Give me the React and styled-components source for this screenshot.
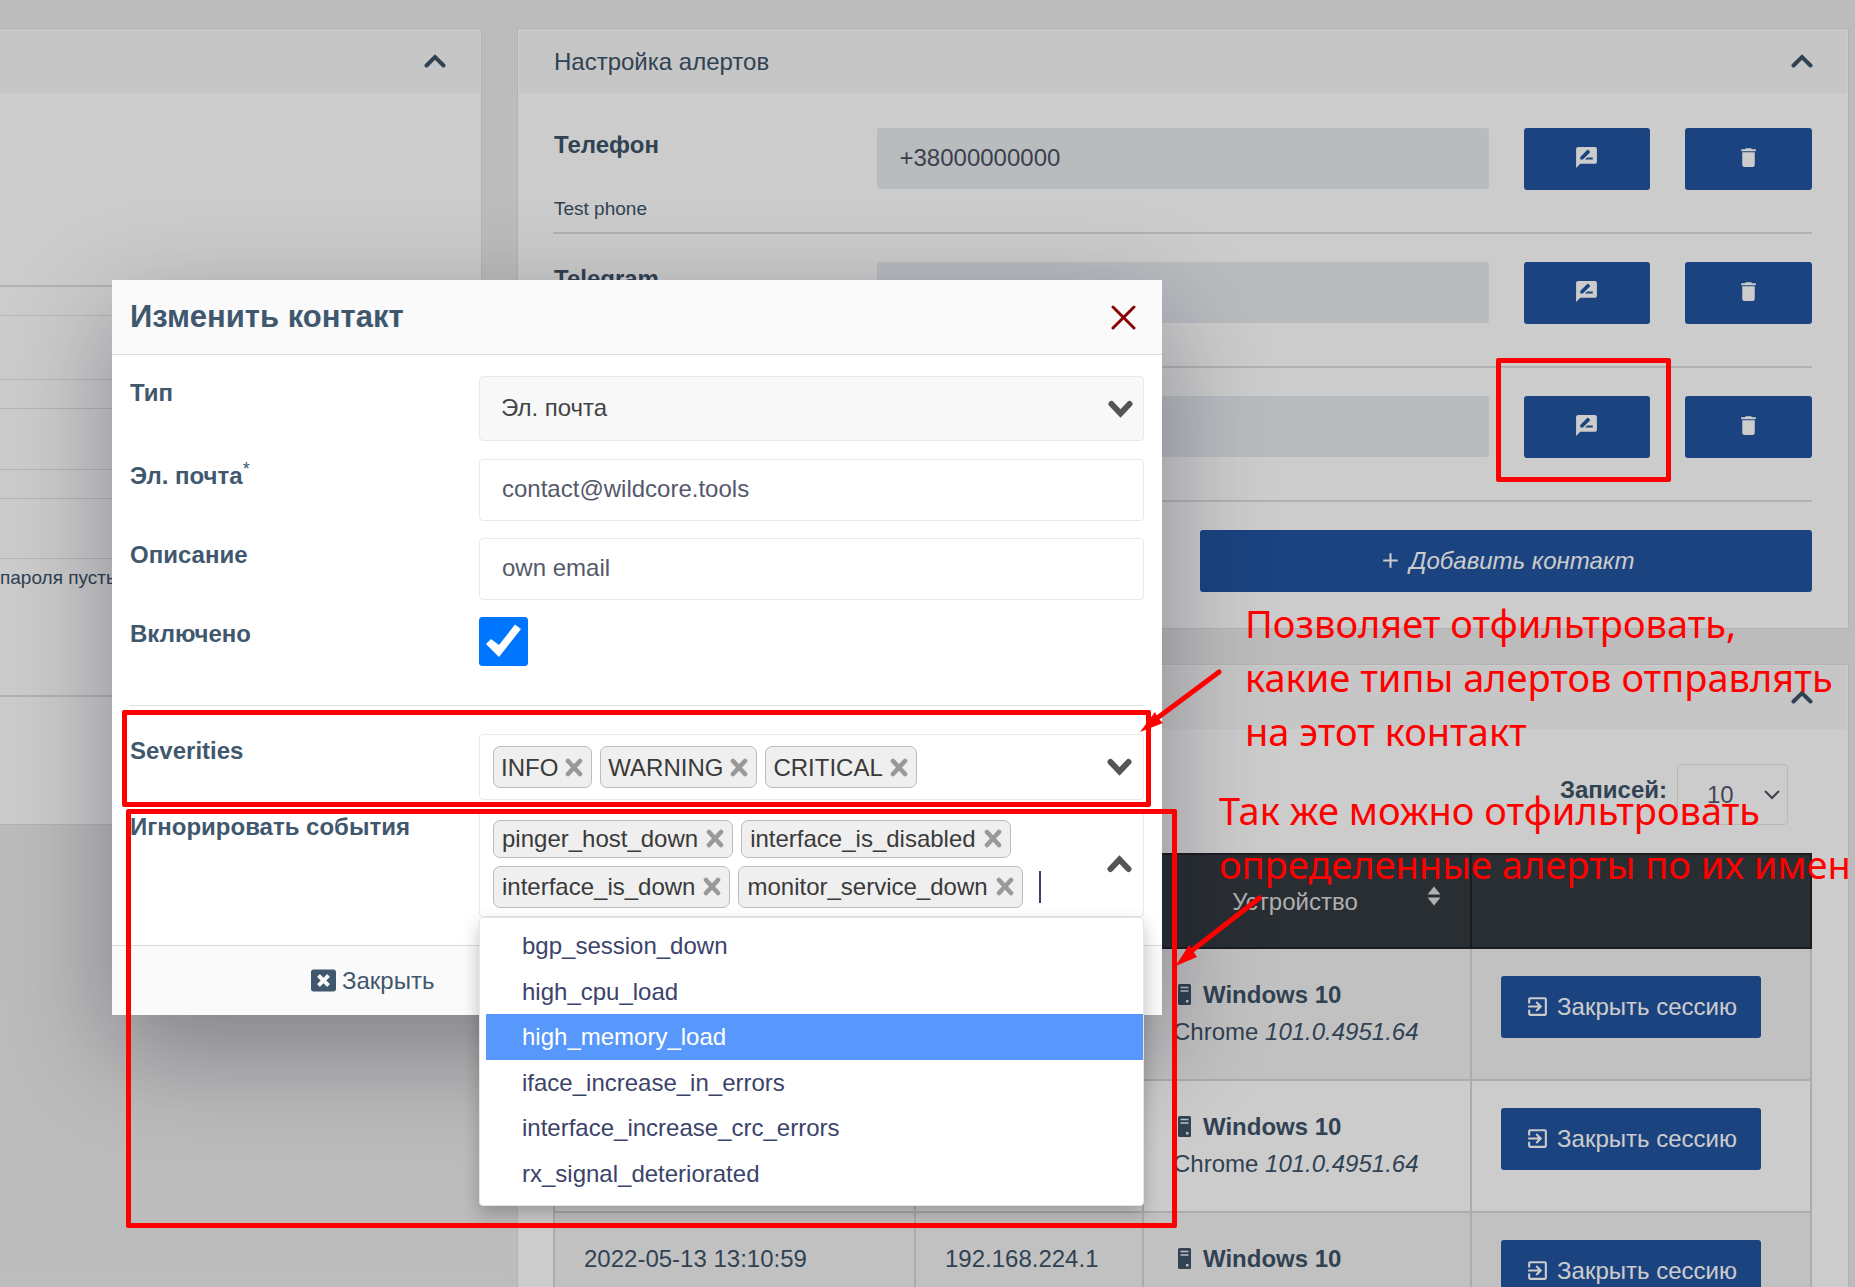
import React from "react";
import styled, { createGlobalStyle, css } from "styled-components";
import { MdRateReview, MdDelete, MdExitToApp, MdAdd } from "react-icons/md";
import { FaWindowClose } from "react-icons/fa";

const GlobalStyle = createGlobalStyle`
  *, *::before, *::after { box-sizing: border-box; }
  body {
    margin: 0;
    background: #ececec;
    color: #3d5368;
    font-family: "Liberation Sans", Arial, sans-serif;
    font-size: 24px;
    line-height: 33px;
  }
  button, input, select { font: inherit; color: inherit; }
  h2, p, ul { margin: 0; padding: 0; }
`;

const Page = styled.div`
  position: relative;
  height: 100vh;
  overflow: hidden;
`;

const Columns = styled.main`
  display: grid;
  grid-template-columns: 482px minmax(0, 1fr);
  gap: 35px;
  align-items: start;
  padding: 28px 6px 0 0;
`;

const Stack = styled.div`
  display: grid;
  gap: 35px;
`;

const Card = styled.section`
  border: 1px solid #e0e0e0;
  border-left-width: ${(p) => (p.$cutLeft ? "0" : "1px")};
  padding: ${(p) => (p.$cutLeft ? "1px 1px 0 0" : "1px 1px 0")};
  background: #fff;
`;

const CardHeader = styled.header`
  display: flex;
  align-items: center;
  justify-content: flex-end;
  height: 63px;
  padding: 0 34px 0 35px;
  background: #f8f8f8;
  > button { padding-bottom: 2px; }
`;

const CardTitle = styled.h2`
  flex: 1;
  font-size: 24px;
  font-weight: 400;
`;

const IconButton = styled.button`
  display: flex;
  padding: 0;
  border: 0;
  background: none;
  cursor: pointer;
`;

const Divider = styled.hr`
  width: 100%;
  height: 2px;
  margin: 0;
  border: 0;
  background: #dfdfdf;
`;

/* left card */
const Blank = styled.div`
  height: ${(p) => p.$height}px;
`;

const StripeRow = styled.div`
  height: ${(p) => p.$height}px;
  border-bottom: 1px solid #e0e3e5;
`;

const Note = styled.p`
  padding: 5px 0 103px;
  font-size: 19px;
  line-height: 28px;
  white-space: nowrap;
`;

/* alert contacts */
const AlertsBody = styled.div`
  display: grid;
  gap: 28px;
  padding: 35px 35px 36px 34px;
`;

const Contact = styled.div`
  display: grid;
  grid-template-rows: 104px 2px;
`;

const ContactGrid = styled.div`
  display: grid;
  grid-template-columns: repeat(8, minmax(0, 1fr));
  column-gap: 35px;
  align-content: start;
`;

const ContactLabel = styled.label`
  grid-column: span 2;
  padding-left: 1px;
  font-weight: 700;
`;

const ContactValue = styled.input`
  grid-column: span 4;
  width: 100%;
  height: 61px;
  padding: 0 23px 2px;
  border: 0;
  border-radius: 3px;
  background: #e6ecef;
  color: #4a5060;
`;

const ContactNote = styled.p`
  grid-column: 1 / -1;
  margin-top: 5px;
  padding-left: 1px;
  font-size: 19px;
  line-height: 28px;
`;

const Primary = styled.button`
  display: flex;
  align-items: center;
  justify-content: center;
  gap: 7px;
  height: 62px;
  padding: 0 0 ${(p) => (p.$iconOnly ? 4 : 2)}px;
  border: 0;
  border-radius: 3px;
  background: #2254a0;
  color: #fff;
  white-space: nowrap;
  cursor: pointer;
  ${(p) =>
    p.$half &&
    css`
      grid-column: 5 / -1;
      font-style: italic;
    `}
  ${(p) => p.$width && `width: ${p.$width}px;`}
`;

/* sessions */
const SessionsBody = styled.div`
  padding: 35px 35px 36px 34px;
`;

const PageSize = styled.div`
  display: flex;
  justify-content: flex-end;
  gap: 10px;
  padding: 0 24px 28px 0;
`;

const PageSizeLabel = styled.label`
  font-weight: 700;
  line-height: 51px;
`;

const SelectBox = styled.div`
  display: grid;
  align-items: center;
  justify-items: end;
  width: ${(p) => (p.$small ? "111px" : "100%")};
  > * { grid-area: 1 / 1; }
  > svg { pointer-events: none; margin-right: ${(p) => (p.$small ? "7px" : "11px")}; }
`;

const SmallSelect = styled.select`
  appearance: none;
  width: 100%;
  height: 61px;
  padding: 0 29px;
  border: 1px solid #e4e6e8;
  border-radius: 4px;
  background: #fff;
  color: #55596b;
`;

const Table = styled.table`
  width: 100%;
  table-layout: fixed;
  border-collapse: collapse;
`;

const Th = styled.th`
  width: ${(p) => (p.$width ? `${p.$width}px` : "auto")};
  height: 94px;
  padding: 0 29px;
  border: 2px solid #212529;
  background: #343a40;
  color: #dcdcdc;
  font-weight: 400;
`;

const ThInner = styled.div`
  display: flex;
  align-items: center;
  gap: 10px;
  > span { flex: 1; text-align: center; }
  > svg { margin-bottom: 10px; }
`;

const Tr = styled.tr`
  background: ${(p) => (p.$shaded ? "#f2f2f2" : "#fff")};
`;

const Td = styled.td`
  height: 132px;
  padding: 27px 29px;
  border: 2px solid #d8d8d8;
  line-height: 37px;
  vertical-align: top;
  white-space: nowrap;
`;

const Device = styled.div`
  display: flex;
  align-items: center;
  gap: 12px;
  padding-left: 5px;
  font-weight: 700;
`;

/* dialog */
const Backdrop = styled.div`
  position: absolute;
  inset: 0;
  display: flex;
  align-items: flex-start;
  padding: 280px 0 0 112px;
  background: rgba(0, 0, 0, 0.2);
`;

const Dialog = styled.section`
  width: 1050px;
  background: #fff;
  box-shadow: 0 36px 100px rgba(8, 8, 28, 0.33);
`;

const DialogHeader = styled.header`
  display: flex;
  align-items: center;
  justify-content: space-between;
  height: 75px;
  padding: 0 26px 0 18px;
  border-bottom: 1px solid #dcdcdc;
  background: #fafafa;
`;

const DialogTitle = styled.h2`
  padding-bottom: 1px;
  font-size: 31px;
  font-weight: 700;
  color: #3f586e;
`;

const DialogBody = styled.form`
  padding: 21px 18px 28px;
`;

const Field = styled.div`
  display: grid;
  grid-template-columns: 349px minmax(0, 1fr);
  align-items: start;
  padding-bottom: ${(p) => p.$space}px;
`;

const FieldLabel = styled.label`
  color: #3f586e;
  font-weight: 700;
`;

const Required = styled.sup`
  font-size: 18px;
  font-weight: 400;
  line-height: 0;
`;

const TextInput = styled.input`
  width: 100%;
  height: 62px;
  padding: 0 22px 2px;
  border: 1px solid #e9e9e9;
  border-radius: 4px;
  background: #fff;
  color: #55596b;
`;

const TypeSelect = styled.select`
  appearance: none;
  width: 100%;
  height: 65px;
  padding: 0 21px 2px;
  border: 1px solid #e9e9e9;
  border-radius: 4px;
  background: #f8f8f8;
  color: #444;
`;

const CheckCell = styled.div`
  display: grid;
  width: 49px;
  > * { grid-area: 1 / 1; }
  > svg { pointer-events: none; }
`;

const Checkbox = styled.input`
  appearance: none;
  width: 49px;
  height: 49px;
  margin: 0;
  border-radius: 3px;
  background: #fff;
  border: 1px solid #0075ff;
  &:checked { background: #0075ff; }
`;

const Rule = styled.hr`
  height: 1px;
  margin: 0 0 28px;
  border: 0;
  background: #e2e2e2;
`;

const MultiSelect = styled.div`
  position: relative;
  display: flex;
  align-items: center;
  justify-content: space-between;
  height: ${(p) => p.$height}px;
  padding: 0 11px 0 13px;
  border: 1px solid #e9e9e9;
  border-radius: 4px;
`;

const TagList = styled.div`
  display: grid;
  gap: 8px;
`;

const TagRow = styled.div`
  display: flex;
  align-items: center;
  gap: 8px;
`;

const Tag = styled.span`
  display: flex;
  align-items: center;
  gap: ${(p) => (p.$caps ? 7 : 8)}px;
  height: ${(p) => (p.$slim ? 38 : 42)}px;
  padding: 0 8px 0 ${(p) => (p.$caps ? 7 : 8)}px;
  border: 1px solid #bdbdbd;
  border-radius: 7px;
  background: #efefef;
  color: #3a3a3a;
`;

const SearchInput = styled.input`
  width: 40px;
  height: 32px;
  margin-left: 8px;
  padding: 0;
  border: 0;
  border-left: 2px solid #3b4468;
  outline: 0;
  background: none;
`;

const Options = styled.ul`
  position: absolute;
  top: 106px;
  left: -1px;
  right: -1px;
  display: grid;
  grid-auto-rows: 1fr;
  height: 289px;
  padding: 5px 0 9px 6px;
  border: 1px solid #e6e6e6;
  border-radius: 4px;
  background: #fff;
  box-shadow: 0 8px 18px rgba(0, 0, 0, 0.24);
  list-style: none;
`;

const Option = styled.li`
  display: flex;
  align-items: center;
  padding-left: 36px;
  background: ${(p) => (p.$active ? "#5897fb" : "#fff")};
  color: ${(p) => (p.$active ? "#fff" : "#3c436a")};
`;

const DialogFooter = styled.footer`
  height: 70px;
  padding: 18px 199px;
  border-top: 1px solid #dcdcdc;
  background: #fafafa;
`;

const CloseLink = styled.button`
  display: flex;
  align-items: center;
  gap: 6px;
  padding: 0;
  border: 0;
  background: none;
  color: #3f586e;
  cursor: pointer;
`;

/* red marks on top of everything */
const Mark = styled.div`
  position: absolute;
  left: ${(p) => p.$x}px;
  top: ${(p) => p.$y}px;
  width: ${(p) => p.$w}px;
  height: ${(p) => p.$h}px;
  border: 5px solid #f00;
  border-radius: 2px;
  pointer-events: none;
`;

const Caption = styled.p`
  position: absolute;
  left: ${(p) => p.$x}px;
  top: ${(p) => p.$y}px;
  margin: 0;
  color: #f00;
  font-family: "Noto Sans", "Open Sans", sans-serif;
  font-size: 38px;
  line-height: 54px;
  white-space: nowrap;
  pointer-events: none;
`;

const Arrows = styled.svg`
  position: absolute;
  left: 1130px;
  top: 660px;
  pointer-events: none;
`;

const CollapseIcon = () => (
  <svg width="22" height="14" viewBox="0 0 22 14" fill="none" stroke="#3d5368" strokeWidth="4" strokeLinecap="round">
    <path d="M2.5 11.5 11 3l8.5 8.5" />
  </svg>
);

const Caret = ({ up }) => (
  <svg width="25" height="18" viewBox="0 0 25 18" fill="none" stroke="#555" strokeWidth="6" strokeLinecap="round">
    <path d={up ? "M3.5 14 12.5 4.5l9 9.5" : "M3.5 4 12.5 13.5l9-9.5"} />
  </svg>
);

const ThinCaret = () => (
  <svg width="18" height="12" viewBox="0 0 18 12" fill="none" stroke="#4a5060" strokeWidth="2">
    <path d="M2 2 9 9l7-7" />
  </svg>
);

const CrossIcon = () => (
  <svg width="25" height="25" viewBox="0 0 25 25" fill="none" stroke="#8b0000" strokeWidth="3" strokeLinecap="round">
    <path d="m2 2 21 21M23 2 2 23" />
  </svg>
);

const TagCross = () => (
  <svg width="18" height="19" viewBox="0 0 18 19" fill="none" stroke="#999" strokeWidth="4.6" strokeLinecap="round">
    <path d="m3 3 12 13M15 3 3 16" />
  </svg>
);

const TickIcon = () => (
  <svg width="49" height="49" viewBox="0 0 49 49" fill="#fff">
    <path d="M12 22 20 28 36 7.500 42 12 20 40 7 27z" />
  </svg>
);

const SortIcon = () => (
  <svg width="14" height="20" viewBox="0 0 14 20" fill="#dcdcdc">
    <path d="M7 0.5 13.5 8.5H.5zM7 19.5.5 11.5h13z" />
  </svg>
);

const TowerIcon = () => (
  <svg width="13" height="21" viewBox="0 0 13 21">
    <rect width="13" height="21" rx="1.5" fill="#3d5368" />
    <path d="M2.5 3.5h8M2.5 7h8" stroke="#f2f2f2" strokeWidth="1.5" />
    <rect x="8" y="16" width="2.5" height="2.5" fill="#f2f2f2" />
  </svg>
);

const STRIPES = [29, 64, 29, 61, 29, 60];

const CONTACTS = [
  { id: "phone", label: "Телефон", value: "+38000000000", note: "Test phone" },
  { id: "telegram", label: "Telegram", value: "" },
  { id: "mail", label: "Эл. почта", value: "" },
];

const SESSIONS = [
  { id: 1 },
  { id: 2 },
  { id: 3, time: "2022-05-13 13:10:59", ip: "192.168.224.1" },
];

const OPTIONS = [
  "bgp_session_down",
  "high_cpu_load",
  "high_memory_load",
  "iface_increase_in_errors",
  "interface_increase_crc_errors",
  "rx_signal_deteriorated",
];

const TagItem = ({ text, slim, caps }) => (
  <Tag $slim={slim} $caps={caps}>
    {text}
    <IconButton type="button" aria-label={`Удалить ${text}`}>
      <TagCross />
    </IconButton>
  </Tag>
);

const Collapse = () => (
  <IconButton type="button" aria-label="Свернуть">
    <CollapseIcon />
  </IconButton>
);

function ProfileCard() {
  return (
    <Card $cutLeft>
      <CardHeader>
        <Collapse />
      </CardHeader>
      <Blank $height={192} />
      <Divider />
      {STRIPES.map((h, i) => (
        <StripeRow key={i} $height={h} />
      ))}
      <Note>пароля пустым</Note>
      <Divider />
      <Blank $height={127} />
    </Card>
  );
}

function AlertsCard() {
  return (
    <Card>
      <CardHeader>
        <CardTitle>Настройка алертов</CardTitle>
        <Collapse />
      </CardHeader>
      <AlertsBody>
        {CONTACTS.map((c) => (
          <Contact key={c.id}>
            <ContactGrid>
              <ContactLabel htmlFor={c.id}>{c.label}</ContactLabel>
              <ContactValue id={c.id} value={c.value} readOnly />
              <Primary type="button" $iconOnly aria-label="Изменить">
                <MdRateReview size={25} />
              </Primary>
              <Primary type="button" $iconOnly aria-label="Удалить">
                <MdDelete size={25} />
              </Primary>
              {c.note && <ContactNote>{c.note}</ContactNote>}
            </ContactGrid>
            <Divider />
          </Contact>
        ))}
        <ContactGrid>
          <Primary type="button" $half>
            <MdAdd size={25} />
            Добавить контакт
          </Primary>
        </ContactGrid>
      </AlertsBody>
    </Card>
  );
}

function SessionsCard() {
  return (
    <Card>
      <CardHeader>
        <Collapse />
      </CardHeader>
      <SessionsBody>
        <PageSize>
          <PageSizeLabel htmlFor="page-size">Записей:</PageSizeLabel>
          <SelectBox $small>
            <SmallSelect id="page-size" defaultValue="10">
              <option>10</option>
            </SmallSelect>
            <ThinCaret />
          </SelectBox>
        </PageSize>
        <Table>
          <thead>
            <tr>
              <Th $width={361} />
              <Th $width={228} />
              <Th $width={328}>
                <ThInner>
                  <span>Устройство</span>
                  <SortIcon />
                </ThInner>
              </Th>
              <Th />
            </tr>
          </thead>
          <tbody>
            {SESSIONS.map((s, i) => (
              <Tr key={s.id} $shaded={i % 2 === 0}>
                <Td>{s.time}</Td>
                <Td>{s.ip}</Td>
                <Td>
                  <Device>
                    <TowerIcon />
                    Windows 10
                  </Device>
                  Chrome <i>101.0.4951.64</i>
                </Td>
                <Td>
                  <Primary type="button" $width={260}>
                    <MdExitToApp size={25} />
                    Закрыть сессию
                  </Primary>
                </Td>
              </Tr>
            ))}
          </tbody>
        </Table>
      </SessionsBody>
    </Card>
  );
}

function ContactDialog() {
  return (
    <Backdrop>
      <Dialog role="dialog" aria-labelledby="dialog-title">
        <DialogHeader>
          <DialogTitle id="dialog-title">Изменить контакт</DialogTitle>
          <IconButton type="button" aria-label="Закрыть окно">
            <CrossIcon />
          </IconButton>
        </DialogHeader>
        <DialogBody>
          <Field $space={18}>
            <FieldLabel htmlFor="type">Тип</FieldLabel>
            <SelectBox>
              <TypeSelect id="type" defaultValue="Эл. почта">
                <option>Эл. почта</option>
              </TypeSelect>
              <Caret />
            </SelectBox>
          </Field>
          <Field $space={17}>
            <FieldLabel htmlFor="email">
              Эл. почта<Required>*</Required>
            </FieldLabel>
            <TextInput id="email" defaultValue="contact@wildcore.tools" />
          </Field>
          <Field $space={17}>
            <FieldLabel htmlFor="description">Описание</FieldLabel>
            <TextInput id="description" defaultValue="own email" />
          </Field>
          <Field $space={39}>
            <FieldLabel htmlFor="enabled">Включено</FieldLabel>
            <CheckCell>
              <Checkbox id="enabled" type="checkbox" defaultChecked />
              <TickIcon />
            </CheckCell>
          </Field>
          <Rule />
          <Field $space={10}>
            <FieldLabel as="span">Severities</FieldLabel>
            <MultiSelect $height={66}>
              <TagRow>
                <TagItem caps text="INFO" />
                <TagItem caps text="WARNING" />
                <TagItem caps text="CRITICAL" />
              </TagRow>
              <Caret />
            </MultiSelect>
          </Field>
          <Field $space={0}>
            <FieldLabel htmlFor="ignored">Игнорировать события</FieldLabel>
            <MultiSelect $height={107}>
              <TagList>
                <TagRow>
                  <TagItem slim text="pinger_host_down" />
                  <TagItem slim text="interface_is_disabled" />
                </TagRow>
                <TagRow>
                  <TagItem text="interface_is_down" />
                  <TagItem text="monitor_service_down" />
                  <SearchInput id="ignored" />
                </TagRow>
              </TagList>
              <Caret up />
              <Options role="listbox">
                {OPTIONS.map((o) => (
                  <Option key={o} role="option" $active={o === "high_memory_load"}>
                    {o}
                  </Option>
                ))}
              </Options>
            </MultiSelect>
          </Field>
        </DialogBody>
        <DialogFooter>
          <CloseLink type="button">
            <FaWindowClose size={25} />
            Закрыть
          </CloseLink>
        </DialogFooter>
      </Dialog>
    </Backdrop>
  );
}

export default function App() {
  return (
    <Page>
      <GlobalStyle />
      <Columns>
        <ProfileCard />
        <Stack>
          <AlertsCard />
          <SessionsCard />
        </Stack>
      </Columns>
      <ContactDialog />
      <Mark $x={1496} $y={358} $w={175} $h={124} />
      <Mark $x={122} $y={710} $w={1029} $h={97} />
      <Mark $x={126} $y={809} $w={1051} $h={419} />
      <Arrows width="140" height="320" viewBox="0 0 140 320" fill="#f00" stroke="#f00">
        <path d="M89 12 26 59" strokeWidth="5" strokeLinecap="round" />
        <path d="M10 72 25 52l3 6 5 5z" stroke="none" />
        <path d="M129.5 238 60 292" strokeWidth="5" strokeLinecap="round" />
        <path d="M45.5 306 59 285l4 6 4 6z" stroke="none" />
      </Arrows>
      <Caption $x={1245} $y={596}>
        Позволяет отфильтровать,
        <br />
        какие типы алертов отправлять
        <br />
        на этот контакт
      </Caption>
      <Caption $x={1219} $y={783}>
        Так же можно отфильтровать
        <br />
        определенные алерты по их имен
      </Caption>
    </Page>
  );
}
